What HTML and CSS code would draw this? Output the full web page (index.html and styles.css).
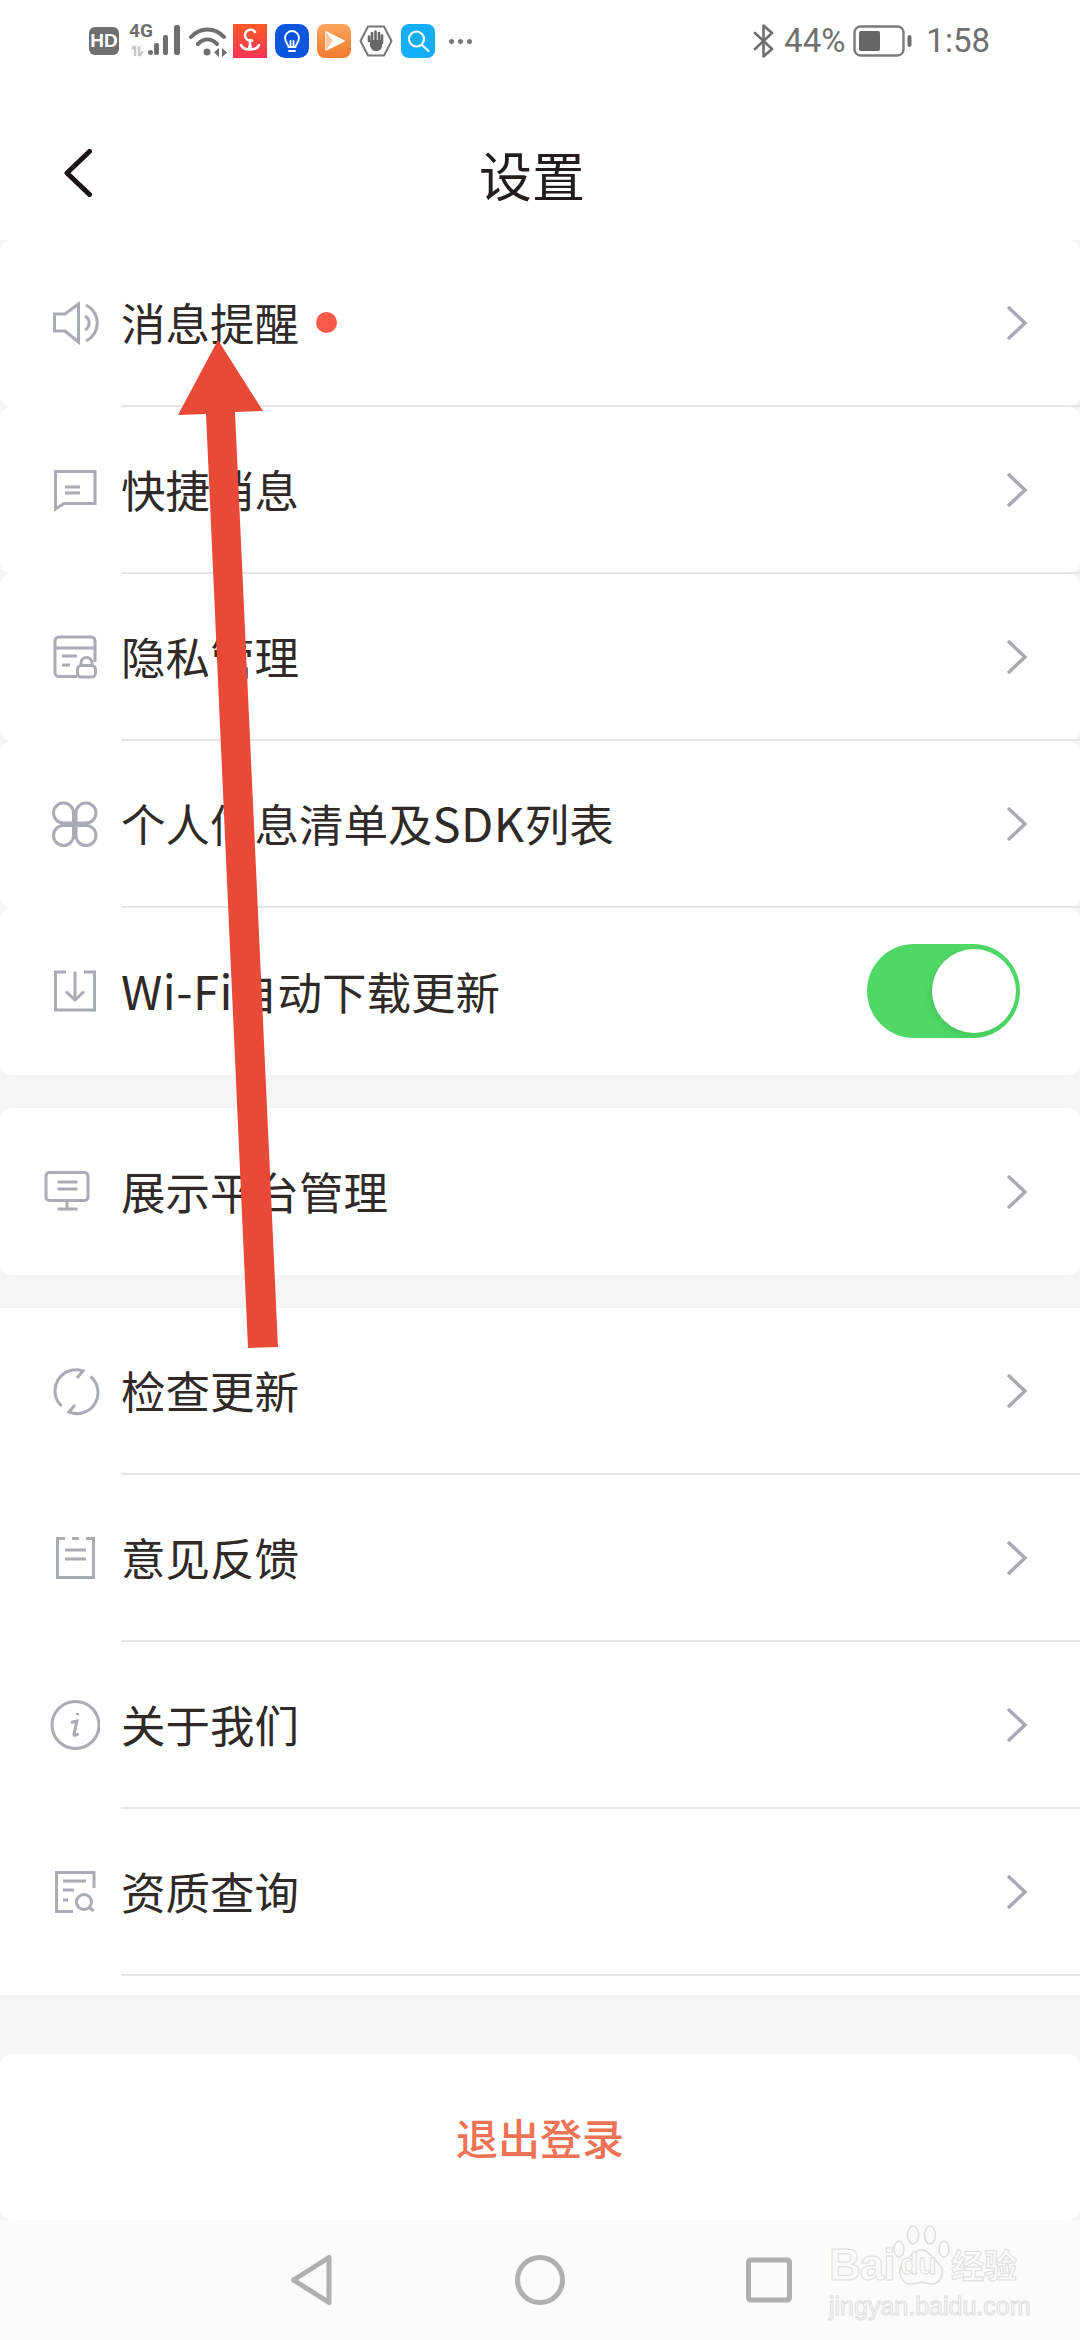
FILE: index.html
```html
<!DOCTYPE html>
<html lang="zh-CN">
<head>
  <meta charset="UTF-8">
  <meta name="viewport" content="width=device-width,initial-scale=1">
  <title>设置</title>
  <link rel="stylesheet" href="styles.css">
</head>
<body>
<div class="page">

  <!-- Barra de status -->
  <div class="status">
    <div class="status-left">
      <span class="hd">HD</span>
      <span class="sig">
        <span class="sig-text">4G</span>
        <svg width="50" height="34" viewBox="0 0 50 34">
          <path class="sig-arrows" d="M5 22v10M5 22l-3 3M9 22v10M9 32l4-4.500"/>
          <rect x="18" y="26" width="5" height="5" rx="2.500" fill="#6f6f6f"/>
          <rect x="24" y="19" width="5" height="12" rx="2" fill="#6f6f6f"/>
          <rect x="33" y="11" width="5" height="20" rx="2" fill="#6f6f6f"/>
          <rect x="44" y="1" width="6" height="30" rx="2" fill="#6f6f6f"/>
        </svg>
      </span>
      <svg class="wifi" width="40" height="34" viewBox="0 0 40 34">
        <path d="M2 13C11 3 26 3 35 13M9 20c6-6 13-6 19 0" fill="none" stroke="#6f6f6f" stroke-width="4" stroke-linecap="round"/>
        <circle cx="18" cy="28" r="3.500" fill="#6f6f6f"/>
        <path d="M30 24v9l-5-4.500zM33 24v9l5-4.500z" fill="#6f6f6f"/>
      </svg>
      <svg class="app" width="34" height="34" viewBox="0 0 34 34">
        <defs><linearGradient id="redg" x1="0" y1="0" x2="0" y2="1"><stop offset="0" stop-color="#ff5a26"/><stop offset="1" stop-color="#fb3358"/></linearGradient></defs>
        <rect width="34" height="34" fill="url(#redg)"/>
        <path d="M22 8a5.500 5.500 0 1 0-3 8.500M17 16v7M8 21c2 6 16 6 18 0" fill="none" stroke="#fff" stroke-width="2.600" stroke-linecap="round"/>
        <circle cx="17" cy="23" r="2" fill="#fff"/>
      </svg>
      <svg class="app" width="34" height="34" viewBox="0 0 34 34">
        <rect width="34" height="34" rx="10" fill="#0b56dd"/>
        <path d="M13.500 23c0-3-3.500-4.500-3.500-9a7 7 0 0 1 14 0c0 4.500-3.500 6-3.500 9zM14 27h6M15.500 23v-6M18.500 23v-6" fill="none" stroke="#fff" stroke-width="1.800" stroke-linecap="round" stroke-linejoin="round"/>
      </svg>
      <svg class="app" width="34" height="34" viewBox="0 0 34 34">
        <defs><linearGradient id="orag" x1="0" y1="0" x2="0" y2="1"><stop offset="0" stop-color="#fba55f"/><stop offset="1" stop-color="#f57a2c"/></linearGradient></defs>
        <rect width="34" height="34" rx="8" fill="url(#orag)"/>
        <path d="M9 8l18 9-18 9z" fill="#fff" stroke="#fff" stroke-width="1.500" stroke-linejoin="round"/>
        <path d="M9 8l7 9-7 9z" fill="#fbc6a0"/>
      </svg>
      <svg class="app" width="34" height="34" viewBox="0 0 34 34">
        <path d="M9 2.500h16L32.500 17 25 31.500H9L1.500 17z" fill="none" stroke="#777" stroke-width="2"/>
        <path d="M10 17v-4.500M13 16v-7M16.500 16V7.500M20 16V9M23 19v-6c0-1 0-1.500 0-1.500" fill="none" stroke="#666" stroke-width="2.600" stroke-linecap="round"/>
        <path d="M11 16h12v6c0 3-2.500 5-6 5s-4.500-2-6-5z" fill="#666"/>
      </svg>
      <svg class="app" width="34" height="34" viewBox="0 0 34 34">
        <rect width="34" height="34" rx="8" fill="#12aef8"/>
        <circle cx="15.500" cy="15" r="7.500" fill="none" stroke="#fff" stroke-width="2.200"/>
        <path d="M21 21l6.500 6" stroke="#fff" stroke-width="2.200" stroke-linecap="round"/>
      </svg>
      <span class="dots"><i></i><i></i><i></i></span>
    </div>
    <div class="status-right">
      <svg width="22" height="34" viewBox="0 0 22 34">
        <path d="M2 9l17 16-8.500 7.500V1.500L19 9 2 25" fill="none" stroke="#6f6f6f" stroke-width="2.600" stroke-linecap="round" stroke-linejoin="round"/>
      </svg>
      <span class="pct">44%</span>
      <svg class="batt" width="59" height="32" viewBox="0 0 59 32">
        <rect x="1.500" y="1.500" width="49" height="29" rx="6" fill="none" stroke="#7a7a7a" stroke-width="2.400"/>
        <rect x="6" y="6" width="21" height="20" rx="2" fill="#666"/>
        <rect x="54.500" y="10" width="4" height="12" rx="2" fill="#6f6f6f"/>
      </svg>
      <span class="clock">1:58</span>
    </div>
  </div>

  <!-- Topo -->
  <div class="topbar">
    <svg class="back" width="28" height="48" viewBox="0 0 28 48">
      <path d="M25.500 2.500L3 24l22.500 21.500" fill="none" stroke="#1c1414" stroke-width="5" stroke-linecap="round" stroke-linejoin="round"/>
    </svg>
    <h1 class="title">设置</h1>
  </div>

  <!-- Grupo 1 -->
  <div class="card">
    <div class="row">
      <svg class="icon" viewBox="0 0 50 50"><path d="M4.500 16H15L28.500 6v38L15 33H4.500z"/><path d="M35 18a8 8 0 0 1 0 14M36 7a20 20 0 0 1 0 36"/></svg>
      <div class="row-body">
        <span class="label">消息提醒</span><span class="dot"></span>
        <svg class="more" viewBox="0 0 24 38"><path d="M3 3l17 16L3 35"/></svg>
      </div>
    </div>
    <div class="row">
      <svg class="icon" viewBox="0 0 50 50"><path d="M5.500 6.500H45v32H14L5.500 44z"/><path d="M15 22h15M15 28h15"/></svg>
      <div class="row-body">
        <span class="label">快捷消息</span>
        <svg class="more" viewBox="0 0 24 38"><path d="M3 3l17 16L3 35"/></svg>
      </div>
    </div>
    <div class="row">
      <svg class="icon" viewBox="0 0 50 50"><path d="M27 44.500H9a4 4 0 0 1-4-4V9a4 4 0 0 1 4-4h32a4 4 0 0 1 4 4v21M5 16h40M12 24h15M12 33h8"/><rect x="27.500" y="33.500" width="18" height="11.500" rx="4"/><path d="M31 33.500V31a5.500 5.500 0 0 1 11 0v2.500"/></svg>
      <div class="row-body">
        <span class="label">隐私管理</span>
        <svg class="more" viewBox="0 0 24 38"><path d="M3 3l17 16L3 35"/></svg>
      </div>
    </div>
    <div class="row">
      <svg class="icon" viewBox="0 0 50 50"><path d="M23.500 24h-10a10 10 0 1 1 10-10zM26 24h10a10 10 0 1 0-10-10zM23.500 26.500h-10a10 10 0 1 0 10 10zM26 26.500h10a10 10 0 1 1-10 10z"/></svg>
      <div class="row-body">
        <span class="label">个人信息清单及<span class="latin">SDK</span>列表</span>
        <svg class="more" viewBox="0 0 24 38"><path d="M3 3l17 16L3 35"/></svg>
      </div>
    </div>
    <div class="row">
      <svg class="icon" viewBox="0 0 50 50"><path d="M16 6H5.500v38h39V6H34M25 5.500V33M16 25.500l9 8.500 9-8.500"/></svg>
      <div class="row-body row-last">
        <span class="label"><span class="latin">Wi-Fi</span>自动下载更新</span>
        <span class="switch"><span class="knob"></span></span>
      </div>
    </div>
  </div>

  <!-- Grupo 2 -->
  <div class="card">
    <div class="row">
      <svg class="icon icon-screen" viewBox="0 0 50 50"><rect x="4" y="6.500" width="42" height="28" rx="3.500"/><path d="M15.500 16h20M15.500 23h20M25 34.500V43M15.500 43h20"/></svg>
      <div class="row-body row-last">
        <span class="label">展示平台管理</span>
        <svg class="more" viewBox="0 0 24 38"><path d="M3 3l17 16L3 35"/></svg>
      </div>
    </div>
  </div>

  <!-- Grupo 3 -->
  <div class="card card-tail">
    <div class="row">
      <svg class="icon" viewBox="0 0 50 50"><path d="M11.500 40A21 21 0 0 1 33 5l-6 7M40.500 10.500A21 21 0 0 1 19 46l6-7"/></svg>
      <div class="row-body">
        <span class="label">检查更新</span>
        <svg class="more" viewBox="0 0 24 38"><path d="M3 3l17 16L3 35"/></svg>
      </div>
    </div>
    <div class="row">
      <svg class="icon" viewBox="0 0 50 50"><path d="M15 5.500H7.500v39h36v-39H36M22 5.500h7M15 17h21M15 26h21"/></svg>
      <div class="row-body">
        <span class="label">意见反馈</span>
        <svg class="more" viewBox="0 0 24 38"><path d="M3 3l17 16L3 35"/></svg>
      </div>
    </div>
    <div class="row">
      <svg class="icon" viewBox="0 0 50 50"><circle cx="25.500" cy="25" r="23.500"/><path d="M21 22.500l6-1.500-3 13c-.5 2 2.500 1.500 4.500-.5"/><circle class="solid" cx="27.500" cy="14" r="1.600"/></svg>
      <div class="row-body">
        <span class="label">关于我们</span>
        <svg class="more" viewBox="0 0 24 38"><path d="M3 3l17 16L3 35"/></svg>
      </div>
    </div>
    <div class="row">
      <svg class="icon" viewBox="0 0 50 50"><path d="M23 44.500H6.500v-39H44V21M13 14h23M13 23h11M13 33h5"/><circle cx="34" cy="35" r="7.500"/><path d="M39.500 40.500l4 3.500"/></svg>
      <div class="row-body">
        <span class="label">资质查询</span>
        <svg class="more" viewBox="0 0 24 38"><path d="M3 3l17 16L3 35"/></svg>
      </div>
    </div>
  </div>

  <!-- Sair -->
  <div class="logout">退出登录</div>

  <!-- Navegação -->
  <div class="nav">
    <svg width="60" height="60" viewBox="0 0 60 60"><path d="M48 7.500v45L12.500 30z"/></svg>
    <svg width="60" height="60" viewBox="0 0 60 60"><circle cx="30" cy="30" r="22.500"/></svg>
    <svg width="60" height="60" viewBox="0 0 60 60"><rect x="9.500" y="10" width="41" height="40" rx="2"/></svg>
    <div class="mark">
      <div class="mark-top">
        <span class="mark-bai">Bai</span>
        <span class="mark-paw">
          <svg width="60" height="62" viewBox="0 0 60 62">
            <ellipse cx="8" cy="24" rx="5" ry="8"/><ellipse cx="22" cy="10" rx="5.500" ry="9"/><ellipse cx="39" cy="10" rx="5.500" ry="9"/><ellipse cx="53" cy="24" rx="5" ry="8"/>
            <path d="M30 25c8 0 11 8 18 14 7 7 2 21-9 20-4 0-6-2-9-2s-5 2-9 2C10 60 5 46 12 39c7-6 10-14 18-14z"/>
          </svg>
          <span class="mark-du">du</span>
        </span>
        <span class="mark-cn">经验</span>
      </div>
      <div class="mark-url">jingyan.baidu.com</div>
    </div>
  </div>

  <!-- Seta vermelha por cima da lista -->
  <svg class="arrow" width="1080" height="2340" viewBox="0 0 1080 2340">
    <path d="M218 340L263 411 235 412 278 1347 248 1348 206 414 178 415z"/>
  </svg>
</div>
</body>
</html>
```

FILE: styles.css
```css
* { margin:0; padding:0; box-sizing:border-box; }
html, body { width:100%; height:100%; background:#f5f5f5; overflow:hidden; }
body { font-family:"Noto Sans CJK SC", "Noto Sans", sans-serif; color:#2f2a27; }
.page { position:relative; width:1080px; height:2340px; background:#f5f5f5; overflow:hidden; }

/* Barra de status */
.status {
  display:flex; align-items:center; justify-content:space-between;
  height:80px; padding:2px 90px 0 89px;
  background:#fff; color:#6f6f6f;
}
.status-left, .status-right { display:flex; align-items:center; }
.hd {
  width:30px; height:28px; margin-right:11px;
  background:#6f6f6f; color:#fff; border-radius:6px;
  font:700 19px/28px "Liberation Sans", sans-serif; text-align:center;
}
.sig { position:relative; display:flex; margin-right:9px; }
.sig-text {
  position:absolute; left:-1px; top:-3px;
  font:700 19px/20px "Roboto", sans-serif; color:#6f6f6f;
}
.sig-arrows { fill:none; stroke:#c8c8c8; stroke-width:2.500; }
.wifi { margin-right:4px; }
.app { margin-right:8px; }
.dots { display:flex; gap:4px; margin-left:6px; }
.dots i { width:5px; height:5px; border-radius:50%; background:#777; }
.pct, .clock { font:400 33px/40px "Roboto", sans-serif; color:#707070; }
.pct { margin:0 8px 0 9px; }
.batt { margin-right:14px; }

/* Topo */
.topbar { display:flex; align-items:center; height:160px; padding:28px 108px 0 64px; background:#fff; }
.back { margin-top:-2px; }
.title { flex:1; font-size:53px; font-weight:400; line-height:60px; text-align:center; color:#231d1b; }

/* Listas */
.card { margin-bottom:33px; }
.card-tail { margin-bottom:59px; padding-bottom:19px; background:#fff; }
.row { display:flex; height:167px; background:#fff; border-radius:12px; }
.icon {
  flex:none; align-self:center; width:50px; height:50px;
  margin:0 21px 2px 50px;
  fill:none; stroke:#a9acb5; stroke-width:3;
}
.icon .solid { fill:#a9acb5; stroke:none; }
.icon-screen { margin-left:42px; margin-right:29px; }
.row-body {
  flex:1; display:flex; align-items:center;
  padding-right:53px;
  border-bottom:2px solid #e6e6e6;
}
.row-last { border-bottom:none; }
.label { margin-top:-2px; font-size:44.500px; line-height:60px; color:#2f2a27; }
.latin { font-size:47px; letter-spacing:.5px; }
.dot { width:21px; height:21px; margin-left:17px; border-radius:50%; background:#f9594a; }
.more {
  width:24px; height:38px; margin-left:auto; margin-right:-2px;
  fill:none; stroke:#a9a9b3; stroke-width:3.500;
}

/* Interruptor */
.switch {
  display:flex; align-items:center; justify-content:flex-end;
  width:153px; height:94px; margin:0 7px 2px auto; padding-right:4px;
  background:#4fd866; border-radius:47px;
}
.knob { width:84px; height:84px; background:#fff; border-radius:50%; box-shadow:-2px 3px 6px rgba(0,0,0,.08); }

/* Sair */
.logout {
  height:166px; background:#fff; border-radius:12px;
  font-size:42px; font-weight:500; line-height:166px; text-align:center; color:#ee7355;
}

/* Navegação */
.nav {
  position:relative;
  display:flex; align-items:center; justify-content:center; gap:169px;
  height:120px; background:#fbfbfb;
}
.nav svg { fill:none; stroke:#b0b0b0; stroke-width:5; stroke-linejoin:round; }
.mark { position:absolute; left:829px; top:5px; width:196px; }
.mark-top { display:flex; align-items:flex-end; height:60px; }
.mark-bai, .mark-du, .mark-cn {
  color:#fbfbfb; -webkit-text-stroke:1px #dedede; font-family:"Liberation Sans", sans-serif;
}
.mark-bai { font-size:44px; font-weight:700; line-height:40px; width:62px; letter-spacing:-1px; }
.mark-paw { position:relative; width:60px; height:60px; flex:none; }
.mark-paw svg { position:absolute; left:0; top:0; fill:#fbfbfb; stroke:#dedede; stroke-width:1.500; }
.mark-du { position:absolute; left:9px; bottom:4px; font-size:30px; font-weight:700; line-height:34px; }
.mark-cn {
  margin-bottom:4px;
  font-size:33px; font-family:"Noto Sans CJK SC", sans-serif; font-weight:700; line-height:34px; white-space:nowrap;
}
.mark-url {
  margin-top:8px;
  font:400 25px/26px "Liberation Sans", sans-serif;
  color:#fbfbfb; -webkit-text-stroke:1px #dedede; white-space:nowrap;
}

/* Seta */
.arrow { position:absolute; left:0; top:0; pointer-events:none; }
.arrow path { fill:#e94a38; }
```
